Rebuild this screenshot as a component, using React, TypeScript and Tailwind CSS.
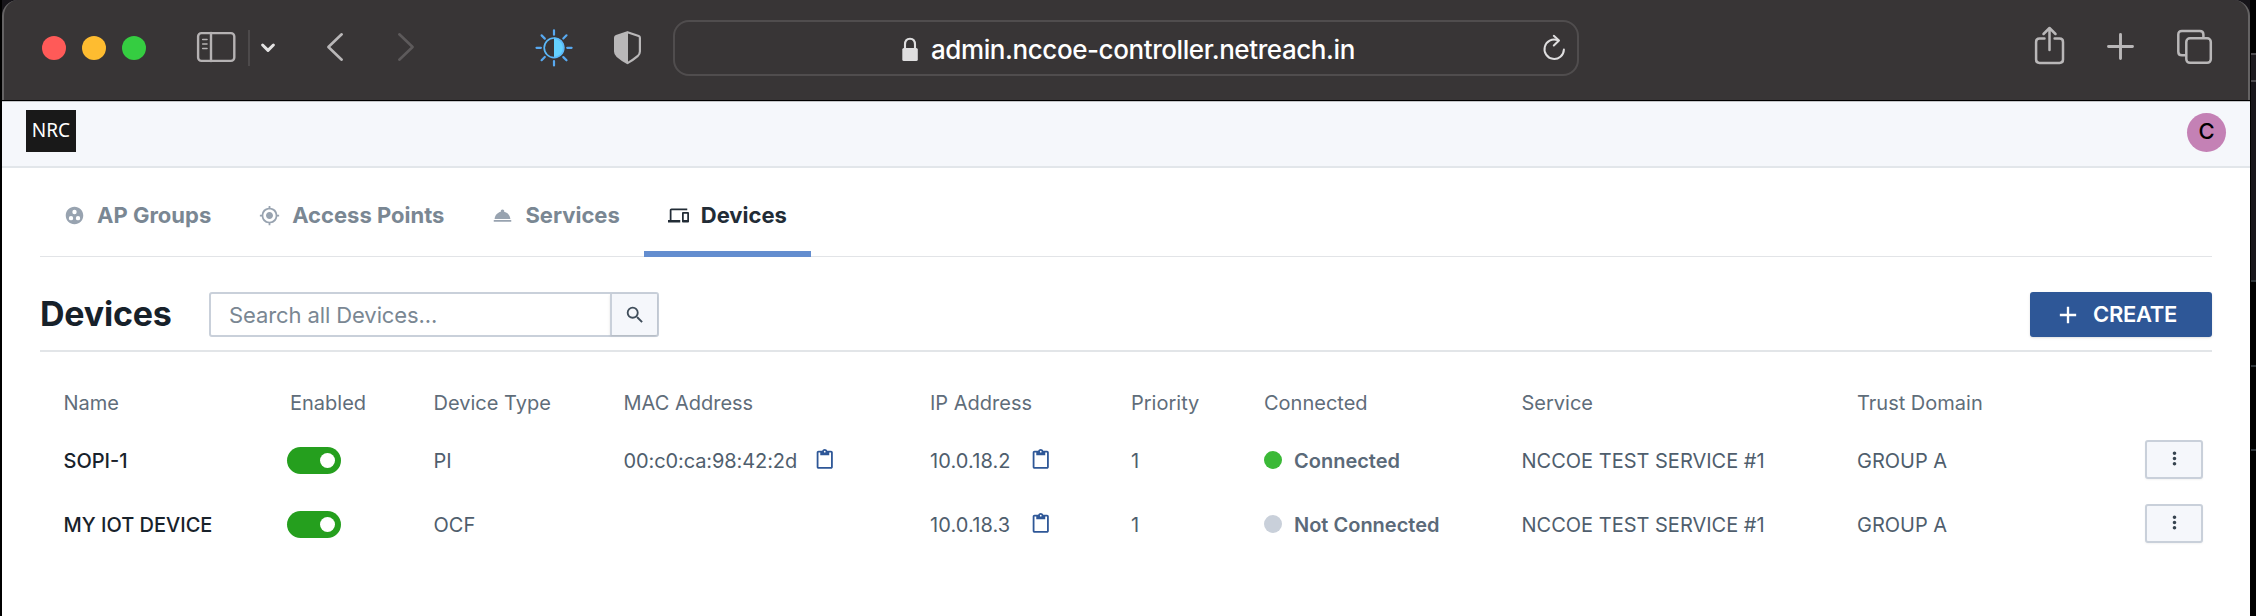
import {
  MdAdd,
  MdContentPaste,
  MdDevices,
  MdGroupWork,
  MdMoreVert,
  MdMyLocation,
  MdRoomService,
  MdSearch,
} from "react-icons/md";

type Device = {
  name: string;
  type: string;
  mac?: string;
  ip: string;
  priority: number;
  connected: boolean;
  service: string;
  domain: string;
};

const devices: Device[] = [
  { name: "SOPI-1", type: "PI", mac: "00:c0:ca:98:42:2d", ip: "10.0.18.2", priority: 1, connected: true, service: "NCCOE TEST SERVICE #1", domain: "GROUP A" },
  { name: "MY IOT DEVICE", type: "OCF", ip: "10.0.18.3", priority: 1, connected: false, service: "NCCOE TEST SERVICE #1", domain: "GROUP A" },
];

const tabs = [
  { label: "AP Groups", icon: MdGroupWork, active: false },
  { label: "Access Points", icon: MdMyLocation, active: false },
  { label: "Services", icon: MdRoomService, active: false },
  { label: "Devices", icon: MdDevices, active: true },
];

const grid =
  "grid grid-cols-[223.5px_146.500px_190px_306.500px_201px_132px_258.500px_335.500px_200px_1fr] pl-[23.500px] pr-[9px]";

function Toolbar() {
  return (
    <div className="flex h-[100px] shrink-0 items-center rounded-t-[16px] border-x-2 border-[#656364] bg-[#383536]">
      <div className="ml-[38px] flex shrink-0 gap-4 pb-1">
        <i className="size-6 rounded-full bg-[#ff5a58]" />
        <i className="size-6 rounded-full bg-[#febc30]" />
        <i className="size-6 rounded-full bg-[#35cd41]" />
      </div>
      <svg className="ml-[50px] h-[100px] w-11 shrink-0" viewBox="196 0 44 100" fill="none" stroke="#b5b2b3" strokeWidth="2.4" strokeLinecap="round">
        <rect x="198.1" y="33.1" width="36.2" height="27.8" rx="3.4" />
        <path d="M211 33v28" />
        <path d="M202.7 39.5h4.3M202.7 44h4.3M202.7 48.5h4.3" strokeWidth="1.6" />
      </svg>
      <i className="mb-1 ml-2 h-9 w-0.5 shrink-0 bg-[#4d4a4b]" />
      <svg className="ml-2 h-[100px] w-5 shrink-0" viewBox="258 0 20 100" fill="none" stroke="#e4e3e3" strokeWidth="3" strokeLinecap="round" strokeLinejoin="round">
        <path d="M262.6 45l5.4 5.4 5.4-5.4" />
      </svg>
      <svg className="ml-[46px] h-[100px] w-6 shrink-0" viewBox="324 0 24 100" fill="none" stroke="#b9b7b8" strokeWidth="2.6" strokeLinecap="round" strokeLinejoin="round">
        <path d="M341.7 34.3L328.4 47l13.3 12.7" />
      </svg>
      <svg className="ml-[46px] h-[100px] w-6 shrink-0" viewBox="394 0 24 100" fill="none" stroke="#5d5a5b" strokeWidth="2.6" strokeLinecap="round" strokeLinejoin="round">
        <path d="M399.3 34.3L412.6 47l-13.3 12.7" />
      </svg>
      <svg className="ml-[116px] h-[100px] w-10 shrink-0" viewBox="534 0 40 100" fill="none" stroke="#58a9f0" strokeWidth="2.2" strokeLinecap="round">
        <path d="M554 37.6a10.2 10.2 0 0 1 0 20.4z" fill="#64d2ff" stroke="none" />
        <circle cx="554" cy="47.8" r="9.8" stroke="#5bb8f8" strokeWidth="1.7" />
        <path d="M554 30.3v4.4M554 61v4.4M536.5 47.8h4.4M567.2 47.8h4.4M541.6 35.4l3.2 3.2M563.3 57.1l3.2 3.2M541.6 60.2l3.2-3.2M563.3 38.5l3.2-3.2" />
      </svg>
      <svg className="ml-[38px] h-[100px] w-8 shrink-0" viewBox="612 0 32 100" fill="none" stroke="#b9b7b8" strokeWidth="2.2" strokeLinejoin="round">
        <path d="M627.5 32.2l11.2 3.8c.8.3 1.2.8 1.2 1.7V51.500c0 2-.7 3.300-2.300 4.700-3 2.600-6.300 4.800-10.100 6.900-3.800-2.100-7.100-4.300-10.100-6.900-1.600-1.400-2.300-2.700-2.300-4.700V37.700c0-.9.4-1.400 1.200-1.700z" />
        <path d="M627.500 32.200V63c-3.800-2.100-7.100-4.300-10.100-6.800-1.600-1.400-2.300-2.700-2.300-4.700V37.700c0-.9.4-1.400 1.200-1.700z" fill="#b9b7b8" stroke="none" />
        <path d="M627.500 32.200V63" strokeWidth="1" />
      </svg>
      <div className="mb-1 ml-[29px] flex h-14 w-[906px] shrink-0 items-center rounded-[16px] border-2 border-[#504d4e]">
        <svg className="ml-[225px] h-[52px] w-5 shrink-0" viewBox="900 22 20 52" fill="none" stroke="#dfdedf" strokeWidth="2.1">
          <path d="M905 49v-4.500c0-3.800 2-5.800 5-5.800s5 2 5 5.800V49" />
          <rect x="902.300" y="48" width="15.500" height="13" rx="1.600" fill="#dfdedf" stroke="none" />
        </svg>
        <span className="ml-[11px] whitespace-nowrap pt-[3px] text-[26px] font-medium leading-8 tracking-[-0.42px] text-white">
          admin.nccoe-controller.netreach.in
        </span>
        <svg className="ml-auto mr-[9px] h-[52px] w-7 shrink-0" viewBox="1540 22 28 52" fill="none" stroke="#dfdedf" strokeWidth="2" strokeLinecap="round" strokeLinejoin="round">
          <path d="M1557.500 40.100a9.700 9.700 0 1 0 6.400 9.500" />
          <path d="M1553.800 35.800l5.200 4.700-5.200 5" />
        </svg>
      </div>
      <svg className="ml-[451px] h-[100px] w-10 shrink-0" viewBox="2030 0 40 100" fill="none" stroke="#b9b7b8" strokeWidth="2.500" strokeLinecap="round" strokeLinejoin="round">
        <path d="M2044.500 38.500h-5c-2.200 0-3.400 1.200-3.400 3.400v17.600c0 2.200 1.200 3.400 3.400 3.400h20.100c2.200 0 3.400-1.200 3.400-3.400V41.900c0-2.200-1.200-3.400-3.400-3.400h-5" />
        <path d="M2049.500 50V28.500M2043.500 34l6-6 6 6" />
      </svg>
      <svg className="ml-[34px] h-[100px] w-[34px] shrink-0" viewBox="2104 0 34 100" fill="none" stroke="#b9b7b8" strokeWidth="2.900" strokeLinecap="round">
        <path d="M2120.500 34.500v24M2108.500 46.500h24" />
      </svg>
      <svg className="ml-9 h-[100px] w-[42px] shrink-0" viewBox="2174 0 42 100" fill="none" stroke="#b9b7b8" strokeWidth="2.500">
        <rect x="2186.300" y="38.300" width="24.500" height="24.500" rx="3.600" />
        <path d="M2186.300 55.300h-4.400c-2.400 0-3.600-1.200-3.600-3.600V34.600c0-2.400 1.200-3.600 3.600-3.600h17.900c2.400 0 3.600 1.200 3.600 3.600v3.700" />
      </svg>
    </div>
  );
}

function DeviceRow({ device }: { device: Device }) {
  return (
    <div className={`${grid} h-16 items-center text-[#4f5e6d]`}>
      <span className="pt-px font-medium text-[#18222b]">{device.name}</span>
      <span className="flex h-[27px] w-[54px] items-center justify-end rounded-full bg-[#259f1e] pr-1.5">
        <i className="size-[15px] rounded-full bg-white" />
      </span>
      <span className="pt-px">{device.type}</span>
      <span className="flex items-center pt-px tracking-[-0.1px]">
        {device.mac && (
          <>
            {device.mac}
            <MdContentPaste className="mb-0.5 ml-[17px] size-[21.500px] text-[#2e5797]" />
          </>
        )}
      </span>
      <span className="flex items-center pt-px">
        <span className="w-[100px] tracking-[0.1px]">{device.ip}</span>
        <MdContentPaste className="mb-0.5 size-[21.500px] text-[#2e5797]" />
      </span>
      <span className="pt-px">{device.priority}</span>
      <span className="flex items-center whitespace-nowrap pl-px pt-px font-semibold text-[#5b6a79]">
        <i className={`mb-px mr-3 size-[18px] rounded-full ${device.connected ? "bg-[#3bb937]" : "bg-[#c9d0da]"}`} />
        {device.connected ? "Connected" : "Not Connected"}
      </span>
      <span className="pt-px">{device.service}</span>
      <span className="pt-px">{device.domain}</span>
      <button className="mb-px flex h-[39px] w-[58px] items-center justify-center justify-self-end rounded-[3px] border-2 border-[#c9d0da] bg-[#f5f7fb] shadow-xs">
        <MdMoreVert className="mb-0.5 size-[21px] text-[#36434f]" />
      </button>
    </div>
  );
}

export default function App() {
  return (
    <div className="flex h-[616px] w-[2256px] overflow-hidden bg-[#17151a] font-['Inter',sans-serif]">
      <div className="w-0.5 bg-black" />
      <div className="flex w-[2248px] flex-col">
        <Toolbar />
        <div className="flex grow flex-col border-t border-black bg-white">
          <header className="flex h-[67px] shrink-0 items-center justify-between border-b-2 border-t border-b-[#e2e6ea] border-t-[#c4c6c9] bg-[#f5f7fb] pl-6 pr-6">
            <div className="mb-1.5 flex h-[42px] w-[50px] items-center justify-center bg-[#191919] pb-0.5 font-['Noto_Sans',sans-serif] text-[19px] text-white">
              NRC
            </div>
            <div className="mb-[3px] flex size-[39px] items-center justify-center rounded-full bg-[#c481b5] pb-[3px] text-[22px] font-medium text-black">
              C
            </div>
          </header>
          <main className="flex grow flex-col pl-[38px] pr-[38px]">
            <nav className="flex h-[89px] shrink-0 border-b border-[#e2e4e7]">
              {tabs.map(({ label, icon: Icon, active }) => (
                <div
                  key={label}
                  className={`-mb-px flex items-center whitespace-nowrap border-b-[6px] px-6 text-[22px] font-bold ${
                    active ? "border-[#638dcf] text-[#222c36]" : "border-transparent text-[#7a8793]"
                  }`}
                >
                  <Icon className={`mr-3 mt-3 size-[21px] ${active ? "" : "text-[#98a3b0]"}`} />
                  <span className="pt-[11px]">{label}</span>
                </div>
              ))}
            </nav>
            <div className="flex h-[95px] shrink-0 items-start border-b-2 border-[#e2e5e8] pt-[35px]">
              <h1 className="w-[169px] pt-0.5 text-[34px] font-bold leading-10 tracking-[-0.2px] text-[#17212a]">Devices</h1>
              <div className="flex h-[45px] w-[450px] rounded-[3px] border-2 border-[#c9d0da]">
                <span className="grow pl-[18px] pt-1.5 text-[22px] leading-[30px] tracking-[-0.1px] text-[#7a8793]">
                  Search all Devices...
                </span>
                <span className="flex w-[47px] items-center justify-center rounded-r-[2px] border-l-2 border-[#c9d0da] bg-[#f5f7fb] shadow-sm">
                  <MdSearch className="size-[22px] text-[#404e5b]" />
                </span>
              </div>
              <button className="ml-auto flex h-[45px] w-[182px] items-center rounded-[3px] bg-[#2e5797] pl-6 text-[22px] font-semibold tracking-[-0.300px] text-white shadow-sm">
                <MdAdd className="mr-[11px] size-7" />
                CREATE
              </button>
            </div>
            <div className="flex grow flex-col text-[20px] leading-6">
              <div className={`${grid} h-[76px] shrink-0 pt-[39px] text-[#5f6d7a]`}>
                <span>Name</span>
                <span className="pl-[3px]">Enabled</span>
                <span>Device Type</span>
                <span>MAC Address</span>
                <span>IP Address</span>
                <span>Priority</span>
                <span className="pl-px">Connected</span>
                <span>Service</span>
                <span>Trust Domain</span>
              </div>
              {devices.map((device) => (
                <DeviceRow key={device.name} device={device} />
              ))}
            </div>
          </main>
        </div>
      </div>
      <div className="flex w-1.5 flex-col bg-black pl-px">
        <i className="mt-[53px] h-0.5 bg-[#4c4a4e]" />
        <i className="h-[25px] bg-[#1b191d]" />
        <i className="h-0.5 bg-[#4c4a4e]" />
        <i className="h-[198px] bg-[#17151a]" />
        <i className="h-0.5 bg-[#2c3338]" />
        <i className="mt-[83px] h-0.5 bg-[#2c3338]" />
        <i className="mt-[82px] h-0.5 bg-[#2c3338]" />
      </div>
    </div>
  );
}
